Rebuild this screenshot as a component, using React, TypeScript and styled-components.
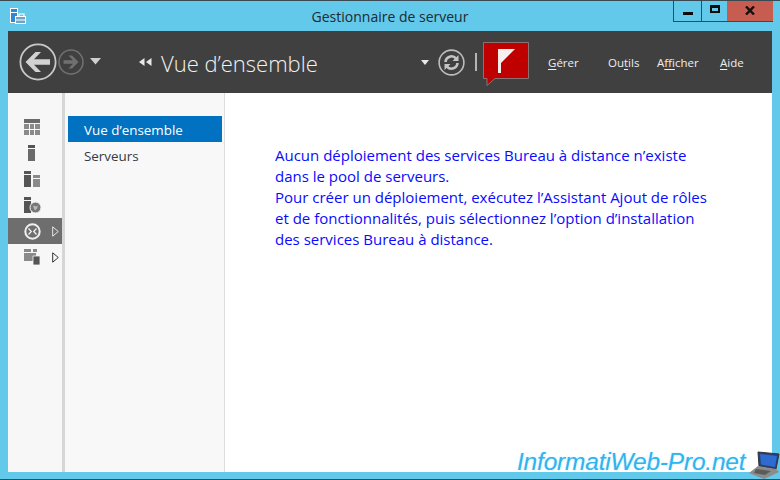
import React from "react";
import styled, { createGlobalStyle } from "styled-components";

const Global = createGlobalStyle`
  html, body { margin: 0; padding: 0; background: #63c9ea; }
  #root { width: 780px; height: 480px; overflow: hidden; }
`;

const Frame = styled.div`
  position: relative;
  width: 780px;
  height: 480px;
  box-sizing: border-box;
  background: #63c9ea;
  border-top: 1px solid #3a4a52;
  border-bottom: 1px solid #3a4a52;
  display: flex;
  flex-direction: column;
  font-family: "Open Sans", "Noto Sans", sans-serif;
  overflow: hidden;
`;

const TitleBar = styled.div`
  position: relative;
  height: 30px;
  flex: none;
  display: flex;
  align-items: center;
  justify-content: center;
`;

const AppIcon = styled.svg`
  position: absolute;
  left: 9px;
  top: 6px;
`;

const Title = styled.div`
  font-size: 14px;
  color: #1c2a30;
`;

const WindowButtons = styled.div`
  position: absolute;
  right: 7px;
  top: 0;
  display: flex;
  height: 21px;
  box-sizing: border-box;
`;

const WinButton = styled.div<{ $w: number; $close?: boolean }>`
  width: ${(p) => p.$w}px;
  height: 21px;
  box-sizing: border-box;
  display: flex;
  align-items: center;
  justify-content: center;
  background: ${(p) => (p.$close ? "#c75c50" : "transparent")};
  border-left: ${(p) => (p.$close ? "none" : "1px solid #27505f")};
  border-bottom: 1px solid #27505f;
`;

const MinGlyph = styled.div`
  width: 10px;
  height: 3px;
  margin-top: 5px;
  background: #0c0c0c;
`;

const MaxGlyph = styled.div`
  width: 10px;
  height: 8px;
  box-sizing: border-box;
  border: 2px solid #0c0c0c;
  border-top-width: 3px;
  margin-top: -4px;
`;

const Inner = styled.div`
  flex: 1;
  min-height: 0;
  margin: 0 8px 7px;
  display: flex;
  flex-direction: column;
`;

const Header = styled.div`
  height: 62px;
  flex: none;
  background: #404040;
  display: flex;
  align-items: center;
`;

const NavIcons = styled.div`
  display: flex;
  align-items: center;
  margin-left: 11px;
  width: 120px;
  flex: none;
`;

const Crumb = styled.div`
  display: flex;
  align-items: center;
  color: #f2f2f2;
  font-size: 22px;
  font-weight: 300;
  width: 282px;
  flex: none;
  gap: 9px;
  padding-top: 1px;
  box-sizing: border-box;
`;

const Tools = styled.div`
  display: flex;
  align-items: center;
  flex: none;
`;

const Divider = styled.div`
  width: 2px;
  height: 18px;
  background: #b5b5b5;
  margin: 0 6px 0 10px;
`;

const Flag = styled.svg`
  display: block;
  margin-top: 4px;
`;

const Menu = styled.div`
  display: flex;
  margin-left: 18px;
  height: 20px;
  align-items: center;
`;

const MenuItem = styled.div<{ $w: number }>`
  width: ${(p) => p.$w}px;
  font-size: 11.5px;
  color: #eeeeee;
  white-space: nowrap;
  u { text-underline-offset: 2px; }
`;

const Body = styled.div`
  flex: 1;
  min-height: 0;
  display: flex;
  background: #fff;
`;

const Rail = styled.div`
  width: 54px;
  flex: none;
  background: #f7f7f7;
  border-right: 3px solid #d6d6d6;
  padding-top: 21px;
  display: flex;
  flex-direction: column;
`;

const RailItem = styled.div<{ $active?: boolean }>`
  height: 26px;
  display: flex;
  align-items: center;
  padding-left: 16px;
  gap: 9px;
  background: ${(p) => (p.$active ? "#6e6e6e" : "transparent")};
  svg { display: block; flex: none; }
`;

const SideNav = styled.div`
  width: 160px;
  flex: none;
  box-sizing: border-box;
  background: #f8f8f8;
  border-right: 1px solid #dcdcdc;
  padding-top: 23px;
  padding-left: 3px;
`;

const NavEntry = styled.div<{ $active?: boolean }>`
  width: 154px;
  height: 26px;
  box-sizing: border-box;
  padding: 2px 0 0 16px;
  display: flex;
  align-items: center;
  font-size: 13.4px;
  color: ${(p) => (p.$active ? "#ffffff" : "#333a44")};
  background: ${(p) => (p.$active ? "#0072c1" : "transparent")};
`;

const Content = styled.div`
  flex: 1;
  padding: 52px 0 0 50px;
  color: #0a0aff;
  font-size: 15px;
  line-height: 21px;
  white-space: nowrap;
`;

const Watermark = styled.div`
  position: absolute;
  left: 517px;
  top: 447px;
  font-family: "Liberation Sans", Arial, sans-serif;
  font-style: italic;
  font-size: 24.5px;
  line-height: 28px;
  color: #2fb4f0;
  letter-spacing: -0.2px;
  text-shadow: 0 0 2px #bfe8fb;
  white-space: nowrap;
`;

const Laptop = styled.svg`
  position: absolute;
  left: 748px;
  top: 449px;
`;

const Grey = "#6a6a6a";

export default function App() {
  return (
    <Frame>
      <Global />
      <TitleBar>
        <AppIcon width="18" height="18" viewBox="0 0 18 18">
          <path d="M1 1h8v15H1z" fill="#fff" />
          <path d="M2 2h6v3H2zM2 6h6v9H2z" fill="#2d88d8" />
          <path d="M6 9h11v8H6z" fill="#fff" />
          <path d="M7 10h9v6H7z" fill="#6fa3c8" />
          <path d="M10 9V7h5v2" fill="none" stroke="#fff" strokeWidth="1.2" />
          <path d="M7 13h9" stroke="#fff" strokeWidth="1" />
        </AppIcon>
        <Title>Gestionnaire de serveur</Title>
        <WindowButtons>
          <WinButton $w={28}><MinGlyph /></WinButton>
          <WinButton $w={26}><MaxGlyph /></WinButton>
          <WinButton $w={46} $close>
            <svg width="10" height="9" viewBox="0 0 10 9" style={{ marginTop: -2 }}>
              <path d="M1 .5l8 8M9 .5l-8 8" stroke="#111" strokeWidth="2.4" />
            </svg>
          </WinButton>
        </WindowButtons>
      </TitleBar>
      <Inner>
        <Header>
          <NavIcons>
            <svg width="38" height="38" viewBox="0 0 38 38">
              <circle cx="19" cy="19" r="17.6" fill="none" stroke="#c8c8c8" strokeWidth="1.8" />
              <path d="M6.5 19l10-10h5.5l-7 7.2H31v5.6H15l7 7.2h-5.5z" fill="#d2d2d2" />
            </svg>
            <svg width="26" height="26" viewBox="0 0 26 26" style={{ marginLeft: 1 }}>
              <circle cx="13" cy="13" r="12" fill="none" stroke="#707070" strokeWidth="1.6" />
              <path d="M20.5 13l-6.5-6.5h-3.5l4.5 4.7H5.5v3.6H15l-4.5 4.7H14z" fill="#707070" />
            </svg>
            <svg width="11" height="7" viewBox="0 0 11 7" style={{ marginLeft: 6, marginTop: -2 }}>
              <path d="M0 0h11L5.5 6.5z" fill="#d0d0d0" />
            </svg>
          </NavIcons>
          <Crumb>
            <svg width="13" height="8" viewBox="0 0 13 8" style={{ marginTop: -2 }}>
              <path d="M5.5 0v8L0 4zM12.5 0v8L7 4z" fill="#e8e8e8" />
            </svg>
            Vue d’ensemble
          </Crumb>
          <Tools>
            <svg width="8" height="5" viewBox="0 0 8 5">
              <path d="M0 0h8L4 5z" fill="#e8e8e8" />
            </svg>
            <svg width="27" height="27" viewBox="0 0 27 27" style={{ marginLeft: 9 }}>
              <circle cx="13.5" cy="13.5" r="12.4" fill="none" stroke="#bdbdbd" strokeWidth="1.6" />
              <path d="M7.5 13a6 6 0 0 1 10.5-3.6" fill="none" stroke="#c4c4c4" strokeWidth="2.6" />
              <path d="M19.5 14a6 6 0 0 1-10.5 3.6" fill="none" stroke="#c4c4c4" strokeWidth="2.6" />
              <path d="M20.5 6v6h-6zM6.5 21v-6h6z" fill="#c4c4c4" />
            </svg>
            <Divider />
            <Flag width="47" height="44" viewBox="0 0 47 44">
              <path d="M.5.5h45v36H12l-8 7v-7H.5z" fill="#bf0000" stroke="#8a7272" />
              <path d="M15 7h3v24h-3z" fill="#f6ecec" />
              <path d="M18 7h14l-7 7-7 7z" fill="#f7eeee" />
            </Flag>
          </Tools>
          <Menu>
            <MenuItem $w={60}><u>G</u>érer</MenuItem>
            <MenuItem $w={49}>Ou<u>t</u>ils</MenuItem>
            <MenuItem $w={63}>A<u>f</u>ficher</MenuItem>
            <MenuItem $w={30}><u>A</u>ide</MenuItem>
          </Menu>
        </Header>
        <Body>
          <Rail>
            <RailItem>
              <svg width="16" height="16" viewBox="0 0 16 16">
                <path d="M0 0h16v4H0z" fill={Grey} />
                <path d="M0 5h5v5H0zM6 5h4v5H6zM11 5h5v5h-5zM0 11h5v5H0zM6 11h4v5H6zM11 11h5v5h-5z" fill="#8a8a8a" />
              </svg>
            </RailItem>
            <RailItem>
              <svg width="16" height="18" viewBox="0 0 16 18">
                <path d="M4 1h7v3H4z" fill="#555" />
                <path d="M4 5h7v12H4z" fill={Grey} />
              </svg>
            </RailItem>
            <RailItem>
              <svg width="16" height="17" viewBox="0 0 16 17">
                <path d="M0 0h7v3H0zM0 4h7v12H0z" fill="#555" />
                <path d="M9 4h7v3H9zM9 8h7v8H9z" fill="#8a8a8a" />
              </svg>
            </RailItem>
            <RailItem>
              <svg width="17" height="17" viewBox="0 0 17 17">
                <path d="M0 0h7v3H0zM0 4h7v12H0z" fill="#555" />
                <circle cx="11.5" cy="10.5" r="5.5" fill="#777" stroke="#f7f7f7" />
                <path d="M9 8.5l3 1 2-1-1 3-2 2-1-2z" fill="#bbb" />
              </svg>
            </RailItem>
            <RailItem $active>
              <svg width="17" height="17" viewBox="0 0 17 17">
                <circle cx="8.5" cy="8.5" r="7.2" fill="none" stroke="#f0f0f0" strokeWidth="2" />
                <path d="M4.5 5.5l2.8 3-2.8 3M12.5 5.5l-2.8 3 2.8 3" fill="none" stroke="#f0f0f0" strokeWidth="1.3" />
              </svg>
              <svg width="7" height="11" viewBox="0 0 7 11" style={{ marginLeft: 2 }}>
                <path d="M.7.8l5.6 4.7L.7 10.2z" fill="none" stroke="#e8e8e8" />
              </svg>
            </RailItem>
            <RailItem>
              <svg width="17" height="17" viewBox="0 0 17 17">
                <path d="M0 0h7v3H0zM9 0h4v3H9zM0 4h12v8H0z" fill="#8a8a8a" />
                <path d="M9 7h7v9H9z" fill="#555" stroke="#f7f7f7" strokeWidth=".8" />
              </svg>
              <svg width="7" height="11" viewBox="0 0 7 11" style={{ marginLeft: 2 }}>
                <path d="M.7.8l5.6 4.7L.7 10.2z" fill="none" stroke="#333" />
              </svg>
            </RailItem>
          </Rail>
          <SideNav>
            <NavEntry $active>Vue d’ensemble</NavEntry>
            <NavEntry>Serveurs</NavEntry>
          </SideNav>
          <Content>
            Aucun déploiement des services Bureau à distance n’existe<br />
            dans le pool de serveurs.<br />
            Pour créer un déploiement, exécutez l’Assistant Ajout de rôles<br />
            et de fonctionnalités, puis sélectionnez l’option d’installation<br />
            des services Bureau à distance.
          </Content>
        </Body>
      </Inner>
      <Watermark>InformatiWeb-Pro.net</Watermark>
      <Laptop width="32" height="30" viewBox="0 0 32 30">
        <path d="M10 2l21 2-3 15-17-3z" fill="#27407c" stroke="#333" />
        <path d="M12 4l17 2-2 11-14-2.5z" fill="#2f6ad0" />
        <path d="M10 16l18 3 3 3-15 7L1 23z" fill="#8b8b8b" />
        <path d="M8 19l15 2-6 4-11-2z" fill="#5b5b5b" />
      </Laptop>
    </Frame>
  );
}
